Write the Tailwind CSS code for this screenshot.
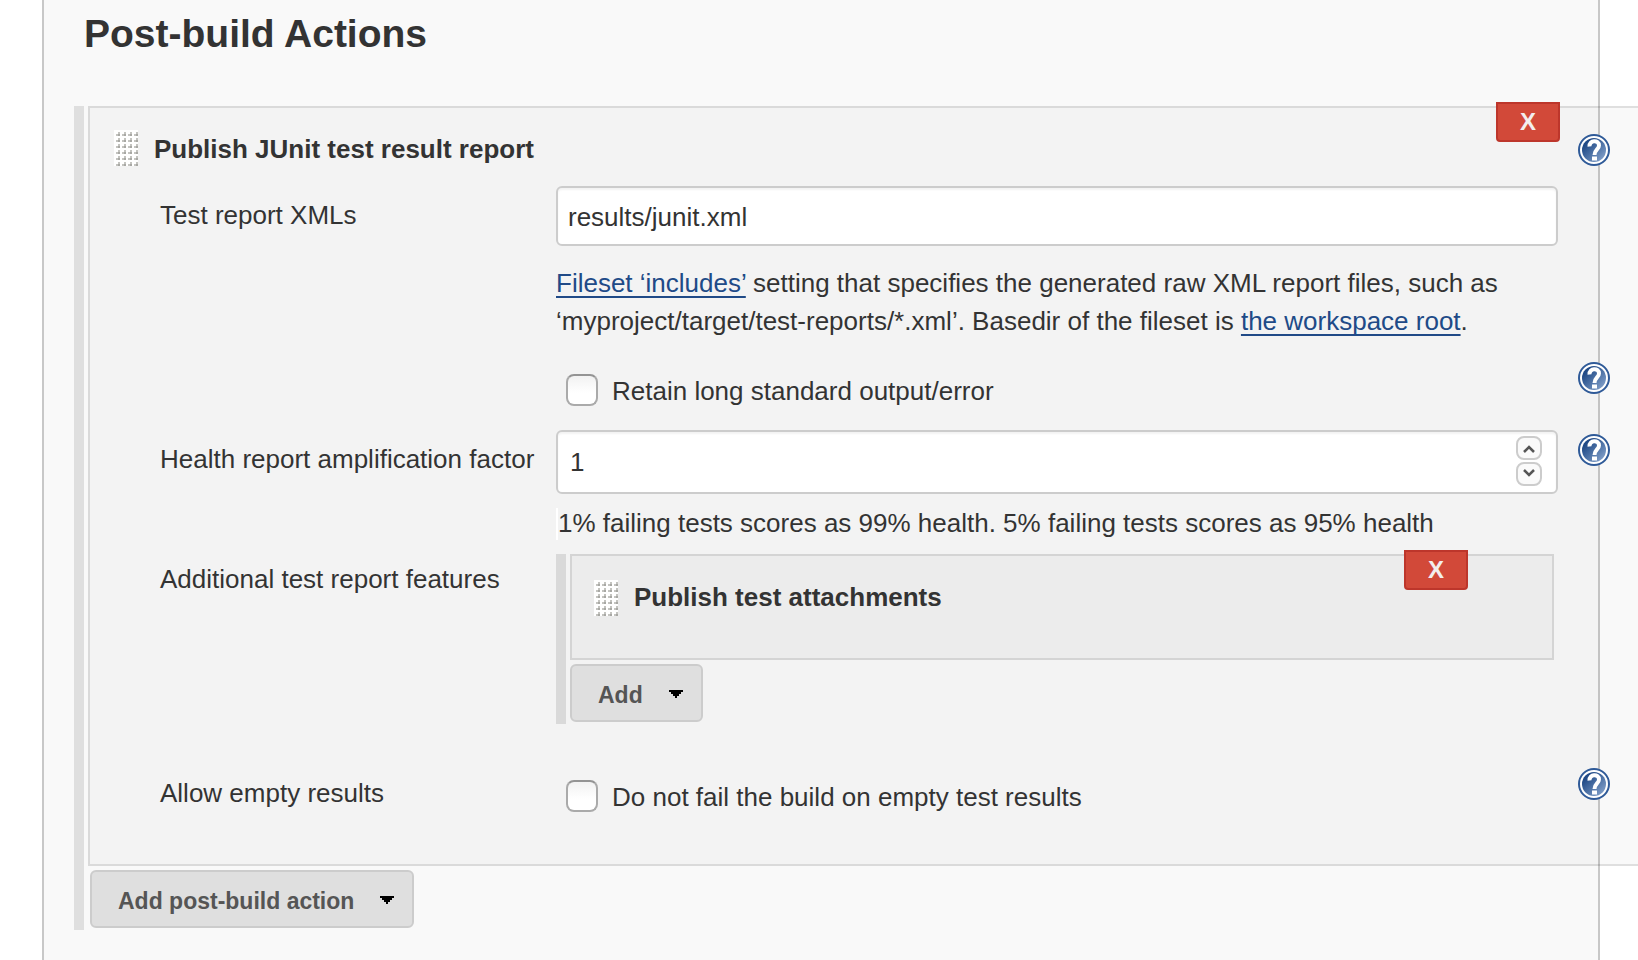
<!DOCTYPE html>
<html lang="en">
<head>
<meta charset="utf-8">
<meta name="viewport" content="width=device-width, initial-scale=1">
<title>Post-build Actions</title>
<script src="https://cdn.jsdelivr.net/npm/@tailwindcss/browser@4"></script>
</head>
<body class="overflow-x-hidden bg-white font-['Liberation_Sans',Arial,sans-serif] text-[26px] leading-[38px] text-[#333]">
<svg class="absolute size-0" aria-hidden="true">
  <defs>
    <linearGradient id="disc" x1="0" y1="0" x2="1" y2="1">
      <stop offset="0.2" stop-color="#204a87"/><stop offset="1" stop-color="#8fabd2"/>
    </linearGradient>
    <pattern id="dots" width="6" height="6" patternUnits="userSpaceOnUse">
      <rect width="6" height="6" fill="#fff"/>
      <path d="M4 2h2v2H4z" fill="#c4c4c0"/><path d="M2 4h2v2H2z" fill="#c4c4c0"/><path d="M4 4h2v2H4z" fill="#a8a8a4"/>
    </pattern>
  </defs>
  <symbol id="help" viewBox="0 0 32 32">
    <circle cx="16" cy="16" r="15" fill="#fff" stroke="#2f5a98" stroke-width="2"/>
    <circle cx="16" cy="16" r="12" fill="url(#disc)"/>
    <path d="M11.500 12.500C11 6 21 5.500 21 11.500C21 15.500 16.500 15.500 16.500 21" fill="none" stroke="#fff" stroke-width="4"/>
    <path d="M14 22.500h5v4h-5z" fill="#fff"/>
  </symbol>
  <symbol id="grip" viewBox="0 0 24 36"><rect width="24" height="36" fill="url(#dots)"/></symbol>
  <symbol id="caret" viewBox="0 0 14 8"><path d="M0 0h14v2h-2v2h-2v2H8v2H6V6H4V4H2V2H0z"/></symbol>
</svg>

<main class="mr-[38px] ml-[42px] min-h-screen border-x-2 border-[#c8c8c8] bg-[#f9f9f9] pt-2.5 pl-[30px]">
  <h1 class="ml-2.5 text-[39px] leading-[48px] font-bold">Post-build Actions</h1>

  <form class="mt-12 -mr-10 border-l-10 border-[#dfdfdf] pb-0.5 pl-1">
    <section class="relative border-2 border-r-0 border-black/10 bg-black/[0.025] pt-[22px] pb-12">
      <button type="button" aria-label="Delete Publish JUnit test result report" class="absolute -top-1.5 right-[78px] h-10 w-16 rounded-b border-2 border-[#bd362b] bg-[#d24939] text-[24px] leading-9 font-bold text-[#f3eeee]">X</button>

      <header class="grid grid-cols-[1fr_80px]">
        <div class="flex gap-4 pl-6">
          <svg class="h-9 w-6 shrink-0"><use href="#grip"/></svg>
          <h2 class="font-bold">Publish JUnit test result report</h2>
        </div>
        <a href="#help-junit" aria-label="Help" class="mt-1 ml-5 block size-8"><svg class="size-8"><use href="#help"/></svg></a>
      </header>

      <div class="mt-[18px] grid grid-cols-[466px_1fr_80px]">
        <label for="xmls" class="pt-2.5 pl-[70px]">Test report XMLs</label>
        <div>
          <input id="xmls" type="text" value="results/junit.xml" class="block h-[60px] w-full rounded-md border-2 border-[#ccc] bg-white px-2.5 pt-0.5 shadow-[inset_0_2px_2px_rgba(0,0,0,0.05)]">
          <p class="mt-[18px]"><a href="#includes" class="text-[#204a87] underline decoration-2 underline-offset-4 [text-decoration-skip-ink:none]">Fileset ‘includes’</a> setting that specifies the generated raw XML report files, such as ‘myproject/target/test-reports/*.xml’. Basedir of the fileset is <a href="#workspace" class="text-[#204a87] underline decoration-2 underline-offset-4 [text-decoration-skip-ink:none]">the workspace root</a>.</p>
        </div>
      </div>

      <div class="mt-[22px] grid grid-cols-[466px_1fr_80px]">
        <div class="col-start-2 flex gap-3.5 pt-2.5 pl-2.5">
          <input id="retain" type="checkbox" class="mt-0.5 size-8 shrink-0 appearance-none rounded-lg border-2 border-[#aaa] border-t-[#949494] bg-white bg-linear-to-b from-[#f2f2f2] to-white to-60% checked:bg-[#204a87]">
          <label for="retain">Retain long standard output/error</label>
        </div>
        <a href="#help-retain" aria-label="Help" class="ml-5 block size-8"><svg class="size-8"><use href="#help"/></svg></a>
      </div>

      <div class="mt-5 grid grid-cols-[466px_1fr_80px]">
        <label for="factor" class="pt-2.5 pl-[70px] whitespace-nowrap">Health report amplification factor</label>
        <div>
          <div class="relative">
            <input id="factor" type="number" value="1" class="block h-16 w-full [appearance:textfield] rounded-md border-2 border-[#ccc] bg-white px-3 shadow-[inset_0_2px_2px_rgba(0,0,0,0.05)]">
            <div class="absolute top-1.5 right-4 flex flex-col gap-0.5">
              <button type="button" aria-label="Increase" class="flex h-6 w-[26px] items-center justify-center rounded-lg border-2 border-[#ccc] bg-[#fafafa]"><svg class="h-2.5 w-3 fill-none stroke-[#555] stroke-[2.5]" viewBox="0 0 12 10"><path d="M1 9l5-5 5 5"/></svg></button>
              <button type="button" aria-label="Decrease" class="flex h-6 w-[26px] items-center justify-center rounded-lg border-2 border-[#ccc] bg-[#fafafa]"><svg class="h-2.5 w-3 fill-none stroke-[#555] stroke-[2.5]" viewBox="0 0 12 10"><path d="M1 1l5 5 5-5"/></svg></button>
            </div>
          </div>
          <p class="mt-3.5 border-l-2 border-white pb-0.5 leading-[30px]">1% failing tests scores as 99% health. 5% failing tests scores as 95% health</p>
        </div>
        <a href="#help-factor" aria-label="Help" class="mt-1 ml-5 block size-8"><svg class="size-8"><use href="#help"/></svg></a>
      </div>

      <div class="mt-3.5 grid grid-cols-[466px_1fr_80px]">
        <h3 class="pt-1.5 pl-[70px]">Additional test report features</h3>
        <div class="mr-1 border-l-10 border-[#d9d9d9] pb-0.5 pl-1">
          <section class="relative mb-1 border-2 border-[#d4d4d4] bg-[#ececec] pt-6 pb-[42px] pl-[22px]">
            <button type="button" aria-label="Delete Publish test attachments" class="absolute -top-1.5 right-[84px] h-10 w-16 rounded-b border-2 border-[#bd362b] bg-[#d24939] text-[24px] leading-9 font-bold text-[#f3eeee]">X</button>
            <div class="flex gap-4">
              <svg class="h-9 w-6 shrink-0"><use href="#grip"/></svg>
              <h4 class="leading-[34px] font-bold">Publish test attachments</h4>
            </div>
          </section>
          <button type="button" class="flex h-[58px] items-center gap-[26px] rounded-md border-2 border-[#ccc] bg-[#dfdfdf] pt-1 pr-[18px] pl-[26px] text-[23px] font-bold text-[#555]">Add<svg class="mb-0.5 h-2 w-3.5"><use href="#caret" fill="#000"/></svg></button>
        </div>
      </div>

      <div class="mt-11 grid grid-cols-[466px_1fr_80px]">
        <div class="pt-1.5 pl-[70px]">Allow empty results</div>
        <div class="flex gap-3.5 pt-2.5 pl-2.5">
          <input id="empty" type="checkbox" class="mt-0.5 size-8 shrink-0 appearance-none rounded-lg border-2 border-[#aaa] border-t-[#949494] bg-white bg-linear-to-b from-[#f2f2f2] to-white to-60% checked:bg-[#204a87]">
          <label for="empty">Do not fail the build on empty test results</label>
        </div>
        <a href="#help-empty" aria-label="Help" class="ml-5 block size-8"><svg class="size-8"><use href="#help"/></svg></a>
      </div>
    </section>
    <button type="button" class="mt-1 ml-0.5 flex h-[58px] items-center gap-[26px] rounded-md border-2 border-[#ccc] bg-[#dfdfdf] pt-1 pr-[18px] pl-[26px] text-[23px] font-bold text-[#555]">Add post-build action<svg class="mb-0.5 h-2 w-3.5"><use href="#caret" fill="#000"/></svg></button>
  </form>
</main>
</body>
</html>
